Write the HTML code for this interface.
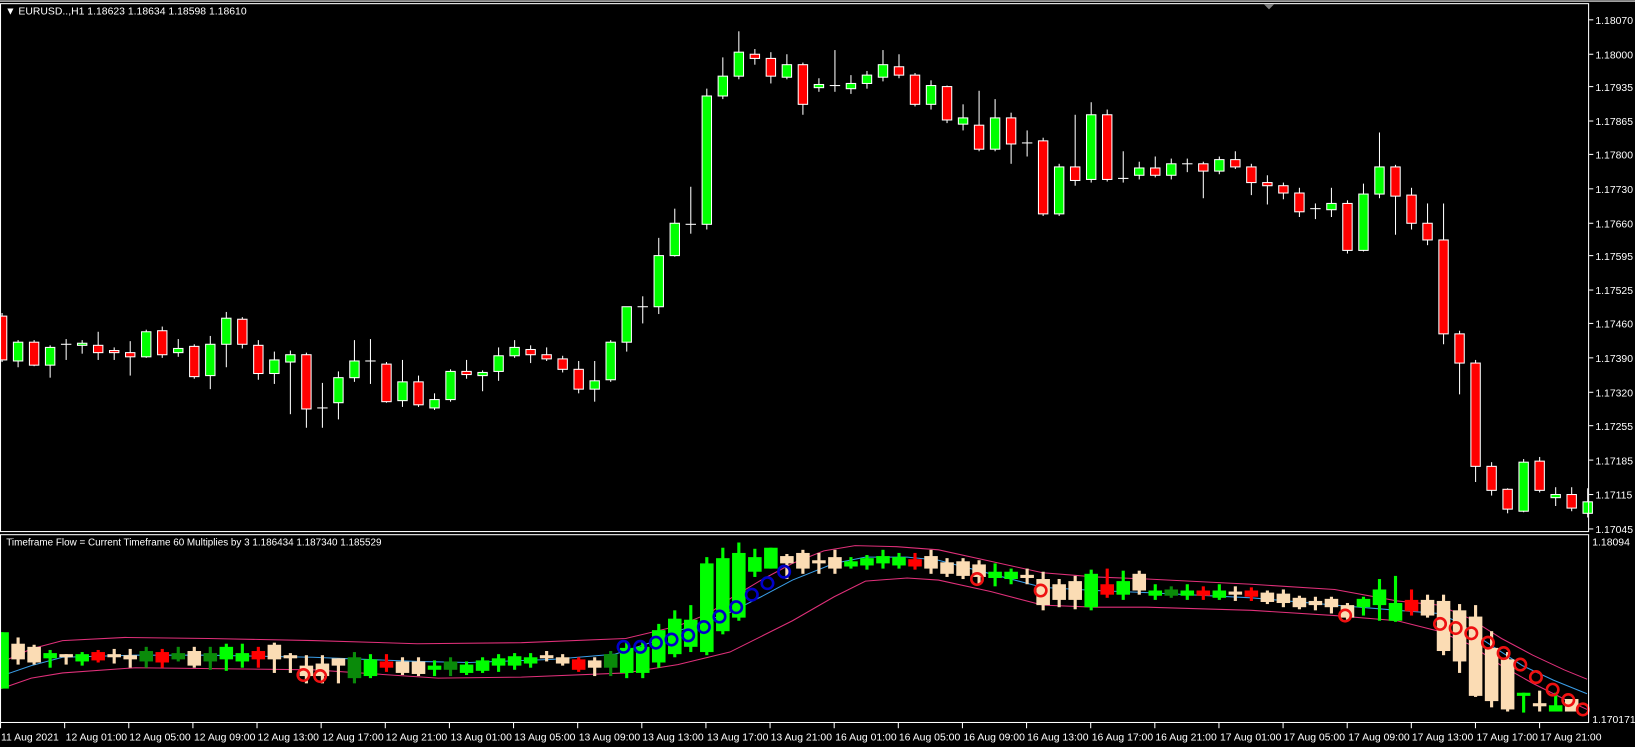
<!DOCTYPE html>
<html><head><meta charset="utf-8">
<style>
html,body{margin:0;padding:0;background:#000;overflow:hidden}
svg{display:block}
text{font-family:"Liberation Sans",sans-serif;font-size:10px;fill:#fff}
</style></head>
<body>
<svg id="s" width="1635" height="747" viewBox="0 0 1568 716" preserveAspectRatio="none" xmlns="http://www.w3.org/2000/svg">
<rect x="0" y="0" width="1568" height="716" fill="#000"/>
<g id="main"></g>
<g id="ind"></g>
<!-- borders -->
<g stroke="#fff" stroke-width="1" fill="none">
<line x1="0" y1="1" x2="1568" y2="1"/>
<rect x="0.5" y="3.5" width="1523" height="506"/>
<rect x="0.5" y="512.5" width="1523" height="180"/>
</g>
<polygon points="1212,4 1222,4 1217,9" fill="#808080"/>
<text x="5" y="14">▼ EURUSD..,H1  1.18623 1.18634 1.18598 1.18610</text>
<text x="6" y="523" style="font-size:9.5px">Timeframe Flow  = Current Timeframe 60 Multiplies by 3   1.186434 1.187340 1.185529</text>
<g id="axis" stroke="#fff"></g>
<g id="lbl">
<text x="1530" y="23">1.18070</text>
<text x="1530" y="56">1.18000</text>
<text x="1530" y="87">1.17935</text>
<text x="1530" y="120">1.17865</text>
<text x="1530" y="152">1.17800</text>
<text x="1530" y="185">1.17730</text>
<text x="1530" y="218">1.17660</text>
<text x="1530" y="249">1.17595</text>
<text x="1530" y="282">1.17525</text>
<text x="1530" y="314">1.17460</text>
<text x="1530" y="347">1.17390</text>
<text x="1530" y="380">1.17320</text>
<text x="1530" y="412">1.17255</text>
<text x="1530" y="445">1.17185</text>
<text x="1530" y="478">1.17115</text>
<text x="1530" y="511">1.17045</text>
<text x="1527" y="523">1.18094</text>
<text x="1527" y="693">1.170171</text>
<text x="1" y="710">11 Aug 2021</text>
<text x="63" y="710">12 Aug 01:00</text>
<text x="124" y="710">12 Aug 05:00</text>
<text x="186" y="710">12 Aug 09:00</text>
<text x="247" y="710">12 Aug 13:00</text>
<text x="309" y="710">12 Aug 17:00</text>
<text x="370" y="710">12 Aug 21:00</text>
<text x="432" y="710">13 Aug 01:00</text>
<text x="493" y="710">13 Aug 05:00</text>
<text x="555" y="710">13 Aug 09:00</text>
<text x="616" y="710">13 Aug 13:00</text>
<text x="678" y="710">13 Aug 17:00</text>
<text x="739" y="710">13 Aug 21:00</text>
<text x="801" y="710">16 Aug 01:00</text>
<text x="862" y="710">16 Aug 05:00</text>
<text x="924" y="710">16 Aug 09:00</text>
<text x="985" y="710">16 Aug 13:00</text>
<text x="1047" y="710">16 Aug 17:00</text>
<text x="1108" y="710">16 Aug 21:00</text>
<text x="1170" y="710">17 Aug 01:00</text>
<text x="1231" y="710">17 Aug 05:00</text>
<text x="1293" y="710">17 Aug 09:00</text>
<text x="1354" y="710">17 Aug 13:00</text>
<text x="1416" y="710">17 Aug 17:00</text>
<text x="1477" y="710">17 Aug 21:00</text>
</g>
</svg>
<script>
var NS="http://www.w3.org/2000/svg";
function el(p,t,a){var e=document.createElementNS(NS,t);for(var k in a)e.setAttribute(k,a[k]);p.appendChild(e);return e;}
function X(i){return 2+15.36*i;}
// main candles: [high, bodyTop, bodyBot, low, color]
var M=[[300,303,345,347,'r'],[326,328,346,352,'g'],[326,328,350,351,'r'],[331,333,350,362,'g'],[325,330,331,345,'w'],[326,329,331,339,'g'],[318,331,338,345,'r'],[333,336,338,345,'r'],[327,338,342,360,'r'],[316,318,342,343,'g'],[313,317,340,343,'r'],[325,334,338,342,'g'],[330,332,361,363,'r'],[322,330,360,373,'g'],[299,305,330,352,'g'],[304,306,330,334,'r'],[326,331,358,364,'r'],[337,345,358,368,'g'],[336,340,347,397,'g'],[338,340,392,410,'r'],[367,391,392,410,'w'],[356,362,386,402,'g'],[326,346,362,366,'g'],[325,346,347,368,'w'],[347,349,385,386,'r'],[345,366,384,390,'g'],[360,366,388,390,'r'],[377,383,391,393,'g'],[354,356,383,385,'g'],[345,356,359,363,'r'],[355,357,360,375,'g'],[333,341,356,365,'g'],[326,333,341,343,'g'],[331,335,340,348,'r'],[333,340,344,346,'r'],[341,344,354,357,'r'],[346,354,373,377,'r'],[346,365,373,385,'g'],[326,328,364,366,'g'],[294,294,328,337,'g'],[284,294,295,310,'w'],[228,245,294,301,'g'],[200,214,245,246,'g'],[179,215,216,224,'w'],[85,92,215,220,'g'],[55,73,92,95,'g'],[30,50,73,76,'g'],[47,52,56,62,'r'],[50,56,73,80,'r'],[52,62,74,76,'g'],[60,62,100,110,'r'],[75,81,84,88,'g'],[48,82,83,88,'w'],[72,80,85,90,'g'],[68,72,80,85,'g'],[48,62,74,78,'g'],[52,64,72,75,'r'],[70,72,100,102,'r'],[77,82,100,105,'g'],[82,83,115,118,'r'],[100,113,119,125,'g'],[87,120,143,145,'r'],[95,113,143,145,'g'],[108,113,138,157,'r'],[125,137,138,150,'w'],[132,135,205,207,'r'],[157,160,205,207,'g'],[110,160,173,178,'r'],[98,110,172,175,'g'],[105,110,172,174,'r'],[145,171,172,175,'w'],[155,161,168,172,'g'],[150,161,168,170,'r'],[152,157,168,172,'g'],[152,157,158,165,'w'],[155,157,164,190,'r'],[150,153,164,167,'g'],[145,153,160,162,'r'],[157,160,175,187,'r'],[168,175,178,196,'r'],[175,178,185,191,'r'],[180,185,203,208,'r'],[195,200,201,210,'w'],[180,195,201,208,'g'],[192,195,240,243,'r'],[176,186,240,241,'g'],[127,160,186,190,'g'],[158,160,188,225,'r'],[180,187,214,220,'r'],[195,214,230,235,'r'],[195,230,320,330,'r'],[317,320,348,378,'r'],[345,348,447,462,'r'],[443,447,470,475,'r'],[468,469,488,492,'r'],[440,443,490,491,'g'],[438,442,470,472,'r'],[467,474,477,485,'g'],[467,474,487,490,'r'],[468,481,492,496,'g']];
var g=document.getElementById('main');
var col={g:'#00ff00',r:'#ff0000',w:'#ffffff'};
M.forEach(function(c,i){var x=X(i);
 if(x>1523)return;
 el(g,'line',{x1:x,y1:c[0],x2:x,y2:c[3],stroke:'#fff','stroke-width':1});
 if(c[4]=='w'||c[2]-c[1]<2){el(g,'line',{x1:x-5,y1:c[1],x2:x+5,y2:c[1],stroke:c[4]=='w'?'#fff':col[c[4]],'stroke-width':c[4]=='w'?1:3});}
 else el(g,'rect',{x:x-4.5,y:c[1],width:9,height:c[2]-c[1],fill:col[c[4]],stroke:'#fff','stroke-width':1});
});
// indicator bars [wickTop, bodyTop, bodyBot, wickBot, color]
var I=[[606,606,660,660,'L'],[611,617,632,637,'W'],[618,620,635,637,'W'],[623,626,631,640,'L'],[627,627,629,637,'W'],[625,627,634,638,'L'],[623,625,633,635,'R'],[622,627,629,636,'W'],[622,628,632,640,'W'],[620,624,634,640,'D'],[622,625,635,640,'R'],[620,626,632,634,'D'],[620,624,638,640,'W'],[620,626,634,642,'D'],[617,620,632,643,'L'],[617,626,634,640,'L'],[620,624,632,640,'R'],[616,618,632,645,'W'],[626,628,630,645,'W'],[628,638,648,655,'W'],[628,636,648,655,'W'],[631,631,638,655,'W'],[625,630,650,655,'D'],[627,632,648,650,'L'],[627,634,640,644,'R'],[630,634,645,647,'W'],[630,634,646,648,'W'],[633,638,642,648,'L'],[630,634,642,648,'D'],[634,637,645,647,'L'],[630,633,643,645,'L'],[627,631,638,644,'L'],[626,629,638,642,'L'],[626,630,636,640,'L'],[624,628,630,634,'W'],[627,630,636,638,'W'],[630,632,642,644,'R'],[630,633,640,648,'W'],[624,627,640,648,'D'],[615,621,645,650,'L'],[615,620,645,650,'L'],[598,604,635,640,'L'],[585,593,627,630,'L'],[580,594,620,625,'L'],[534,540,625,628,'L'],[525,535,605,608,'L'],[520,530,592,595,'L'],[526,534,548,553,'L'],[525,525,545,545,'L'],[531,533,540,555,'W'],[527,530,545,550,'W'],[530,537,540,550,'W'],[527,534,545,550,'W'],[534,538,543,545,'L'],[532,535,542,546,'L'],[527,533,540,545,'L'],[530,534,542,545,'L'],[530,536,543,546,'R'],[527,533,545,550,'W'],[535,539,550,553,'W'],[535,538,552,555,'W'],[537,541,553,560,'W'],[540,548,554,562,'L'],[545,548,555,560,'L'],[545,551,553,560,'W'],[548,555,580,585,'W'],[555,560,575,582,'W'],[552,557,575,584,'W'],[546,550,582,585,'L'],[545,560,570,573,'R'],[547,557,570,575,'L'],[547,550,566,570,'W'],[560,566,571,575,'L'],[562,565,571,573,'D'],[560,566,571,575,'L'],[562,566,571,575,'R'],[560,566,573,575,'L'],[562,567,569,576,'W'],[563,566,572,576,'R'],[566,568,577,579,'W'],[565,569,578,582,'W'],[571,573,582,584,'W'],[572,576,580,585,'W'],[572,574,582,588,'W'],[578,580,592,594,'W'],[572,574,582,590,'L'],[555,565,580,595,'L'],[552,578,595,596,'L'],[565,575,586,590,'R'],[570,575,590,592,'W'],[570,576,624,628,'W'],[579,585,634,645,'W'],[580,591,667,668,'W'],[605,621,672,678,'W'],[625,632,680,682,'W']];
var ig=document.getElementById('ind');
// envelope lines
function pl(pts,c){el(ig,'polyline',{points:pts,fill:'none',stroke:c,'stroke-width':1});}
pl("1,635 30,622 60,614 120,611 200,612 300,614 400,617 500,616 600,612 650,600 680,588 700,574 730,556 760,540 790,528 820,523 860,524 900,527 950,538 1000,549 1050,553 1100,555 1200,560 1280,565 1340,576 1380,580 1410,593 1440,612 1470,628 1500,642 1522,651","#e0307a");
pl("1,660 30,650 60,645 130,640 300,642 420,650 500,649 600,645 650,637 700,625 730,610 760,595 800,572 830,557 870,554 900,556 950,567 1000,580 1050,582 1100,582 1200,585 1280,590 1340,595 1380,605 1410,618 1440,638 1470,655 1500,670 1522,680","#e0307a");
pl("1,648 30,638 60,630 130,628 200,628 300,630 400,634 450,635 530,632 590,627 630,614 650,605 700,587 730,572 760,556 800,540 830,534 870,534 900,537 950,550 1000,563 1050,566 1100,568 1200,573 1280,580 1340,585 1380,588 1400,597 1420,612 1440,625 1460,638 1490,652 1522,665","#3a9ee8");
var ic={W:'#fbdcb4',L:'#00ff00',D:'#0a8a0a',R:'#ff0000'};
I.forEach(function(c,i){var x=X(i);if(x>1523)return;var f=ic[c[4]];
 el(ig,'rect',{x:x-1.5,y:c[0],width:3,height:c[3]-c[0],fill:f});
 var h=Math.max(c[2]-c[1],3);
 el(ig,'rect',{x:x-6.5,y:c[1],width:13,height:h,fill:f});
});
// special end bars
el(ig,'rect',{x:X(95)-6.5,y:664,width:13,height:3,fill:'#00ff00'});el(ig,'rect',{x:X(95)-1.5,y:664,width:3,height:19,fill:'#00ff00'});
el(ig,'rect',{x:X(96)-1.5,y:662,width:3,height:20,fill:'#fbdcb4'});el(ig,'rect',{x:X(96)-6.5,y:674,width:13,height:3,fill:'#fbdcb4'});
el(ig,'rect',{x:X(97)-1.5,y:664,width:3,height:16,fill:'#00ff00'});el(ig,'rect',{x:X(97)-6.5,y:676,width:13,height:6,fill:'#00ff00'});
el(ig,'rect',{x:X(98)-6.5,y:670,width:13,height:12,fill:'#fbdcb4'});
// circles
var blue=[[598,620],[614,620],[629,616],[644,613],[660,609],[675,601],[690,591],[706,582],[721,570],[736,559],[752,548]];
blue.forEach(function(p){el(ig,'circle',{cx:p[0],cy:p[1],r:5.5,fill:'none',stroke:'#0000c8','stroke-width':2.5});});
var red=[[291,647],[307,648],[937,555],[998,566],[1290,590],[1381,598],[1396,602],[1411,607],[1427,616],[1442,626],[1458,637],[1473,649],[1489,661],[1504,671],[1518,680]];
red.forEach(function(p){el(ig,'circle',{cx:p[0],cy:p[1],r:5.5,fill:'none',stroke:'#ee1111','stroke-width':2.5});});
// axis ticks
var ax=document.getElementById('axis');
[19,52,83,116,148,181,214,245,278,310,343,376,408,441,474,507].forEach(function(y){el(ax,'line',{x1:1524,y1:y,x2:1528,y2:y});});
for(var k=0;k<25;k++){var x=0.5+61.5*k;el(ax,'line',{x1:x,y1:693,x2:x,y2:698});}
</script>
</body></html>
